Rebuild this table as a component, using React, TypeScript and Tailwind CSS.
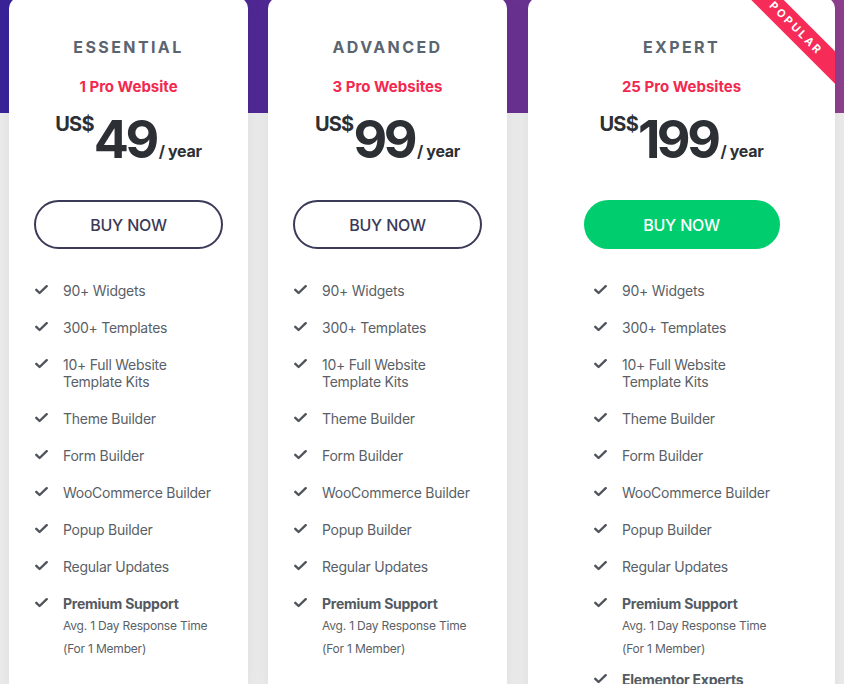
import type { ReactNode } from "react";

type Feature = { label: string; bold?: boolean; sub?: string[] };

const FEATURES: Feature[] = [
  { label: "90+ Widgets" },
  { label: "300+ Templates" },
  { label: "10+ Full Website\nTemplate Kits" },
  { label: "Theme Builder" },
  { label: "Form Builder" },
  { label: "WooCommerce Builder" },
  { label: "Popup Builder" },
  { label: "Regular Updates" },
  {
    label: "Premium Support",
    bold: true,
    sub: ["Avg. 1 Day Response Time", "(For 1 Member)"],
  },
];

const PLANS = [
  { name: "ESSENTIAL", sites: "1 Pro Website", price: "49", features: FEATURES },
  { name: "ADVANCED", sites: "3 Pro Websites", price: "99", features: FEATURES },
  {
    name: "EXPERT",
    sites: "25 Pro Websites",
    price: "199",
    popular: true,
    features: [...FEATURES, { label: "Elementor Experts", bold: true }],
  },
];

function Check() {
  return (
    <svg width="13" height="10" viewBox="0 0 13 10" className="mt-[3px] shrink-0">
      <polyline
        points="1.3,4.8 4.6,8 11.7,1.2"
        fill="none"
        stroke="#4f545b"
        strokeWidth="2.4"
        strokeLinecap="round"
        strokeLinejoin="round"
      />
    </svg>
  );
}

function FeatureRow({ f }: { f: Feature }) {
  return (
    <li className={`flex gap-[15px] ${f.sub ? "mb-[-9px]" : ""}`}>
      <Check />
      <div>
        <div
          className={`whitespace-pre-line text-[14px] leading-[17px] tracking-[-0.25px] ${
            f.bold ? "font-bold text-[#545a62]" : "text-[#5a5f67]"
          }`}
        >
          {f.label}
        </div>
        {f.sub && (
          <div className="mt-[2px] text-[12px] leading-[23px] tracking-[-0.2px] text-[#5a5f67]">
            {f.sub.map((s) => (
              <div key={s}>{s}</div>
            ))}
          </div>
        )}
      </div>
    </li>
  );
}

function Card({
  plan,
  wide,
  children,
}: {
  plan: (typeof PLANS)[number];
  wide?: boolean;
  children?: ReactNode;
}) {
  return (
    <div
      className={`relative -mt-[2px] overflow-hidden rounded-t-[10px] bg-white pt-[39px] shadow-[0_0_18px_rgba(0,0,0,0.07)] ${
        wide ? "w-[307px]" : "w-[239px]"
      }`}
    >
      {children}
      <h3 className="text-center text-[16px] font-bold leading-[20px] tracking-[2.4px] text-[#5b6570]">
        {plan.name}
      </h3>
      <p className="mt-[20px] text-center text-[15px] font-bold leading-[20px] text-[#f2294f]">
        {plan.sites}
      </p>
      <div className="mt-[17px] flex justify-center text-[#2c3035]">
        <span className="text-[20px] font-bold leading-[20px] tracking-[-0.8px]">US$</span>
        <span className="text-[52px] font-bold leading-[52px] tracking-[-3.5px]">{plan.price}</span>
        <span className="mb-[7px] ml-[3px] self-end text-[16px] font-bold leading-[16px] tracking-[-0.3px]">
          / year
        </span>
      </div>
      {plan.popular ? (
        <button className="mx-auto mt-[34px] flex h-[49px] w-[196px] items-center justify-center rounded-full bg-[#00cd6e] text-[16px] font-medium tracking-[-0.2px] text-white">
          BUY NOW
        </button>
      ) : (
        <button className="mx-auto mt-[34px] flex h-[49px] w-[189px] items-center justify-center rounded-full border-2 border-[#3b3a58] text-[16px] font-medium tracking-[-0.2px] text-[#3b3a58]">
          BUY NOW
        </button>
      )}
      <ul
        className={`mt-[33px] flex flex-col gap-[20px] pb-10 ${
          wide ? "pl-[66px]" : "pl-[26px]"
        }`}
      >
        {plan.features.map((f) => (
          <FeatureRow key={f.label} f={f} />
        ))}
      </ul>
    </div>
  );
}

export default function App() {
  return (
    <div
      className="h-[684px] w-[844px] overflow-hidden bg-[#ececec] bg-[linear-gradient(90deg,#392398_0%,#5a2b92_45%,#8e3f8d_100%)] bg-[length:100%_113px] bg-no-repeat"
      style={{ fontFamily: "Inter, 'Noto Sans', sans-serif" }}
    >
      <div className="flex items-start pl-[9px]">
        <Card plan={PLANS[0]} />
        <div className="ml-[20px]">
          <Card plan={PLANS[1]} />
        </div>
        <div className="ml-[21px]">
          <Card plan={PLANS[2]} wide>
            <div className="absolute right-[-31px] top-[19px] flex h-[23px] w-[140px] rotate-45 items-center justify-center bg-[#f72b57] text-[11px] font-bold tracking-[2.5px] text-white">
              POPULAR
            </div>
          </Card>
        </div>
      </div>
    </div>
  );
}
